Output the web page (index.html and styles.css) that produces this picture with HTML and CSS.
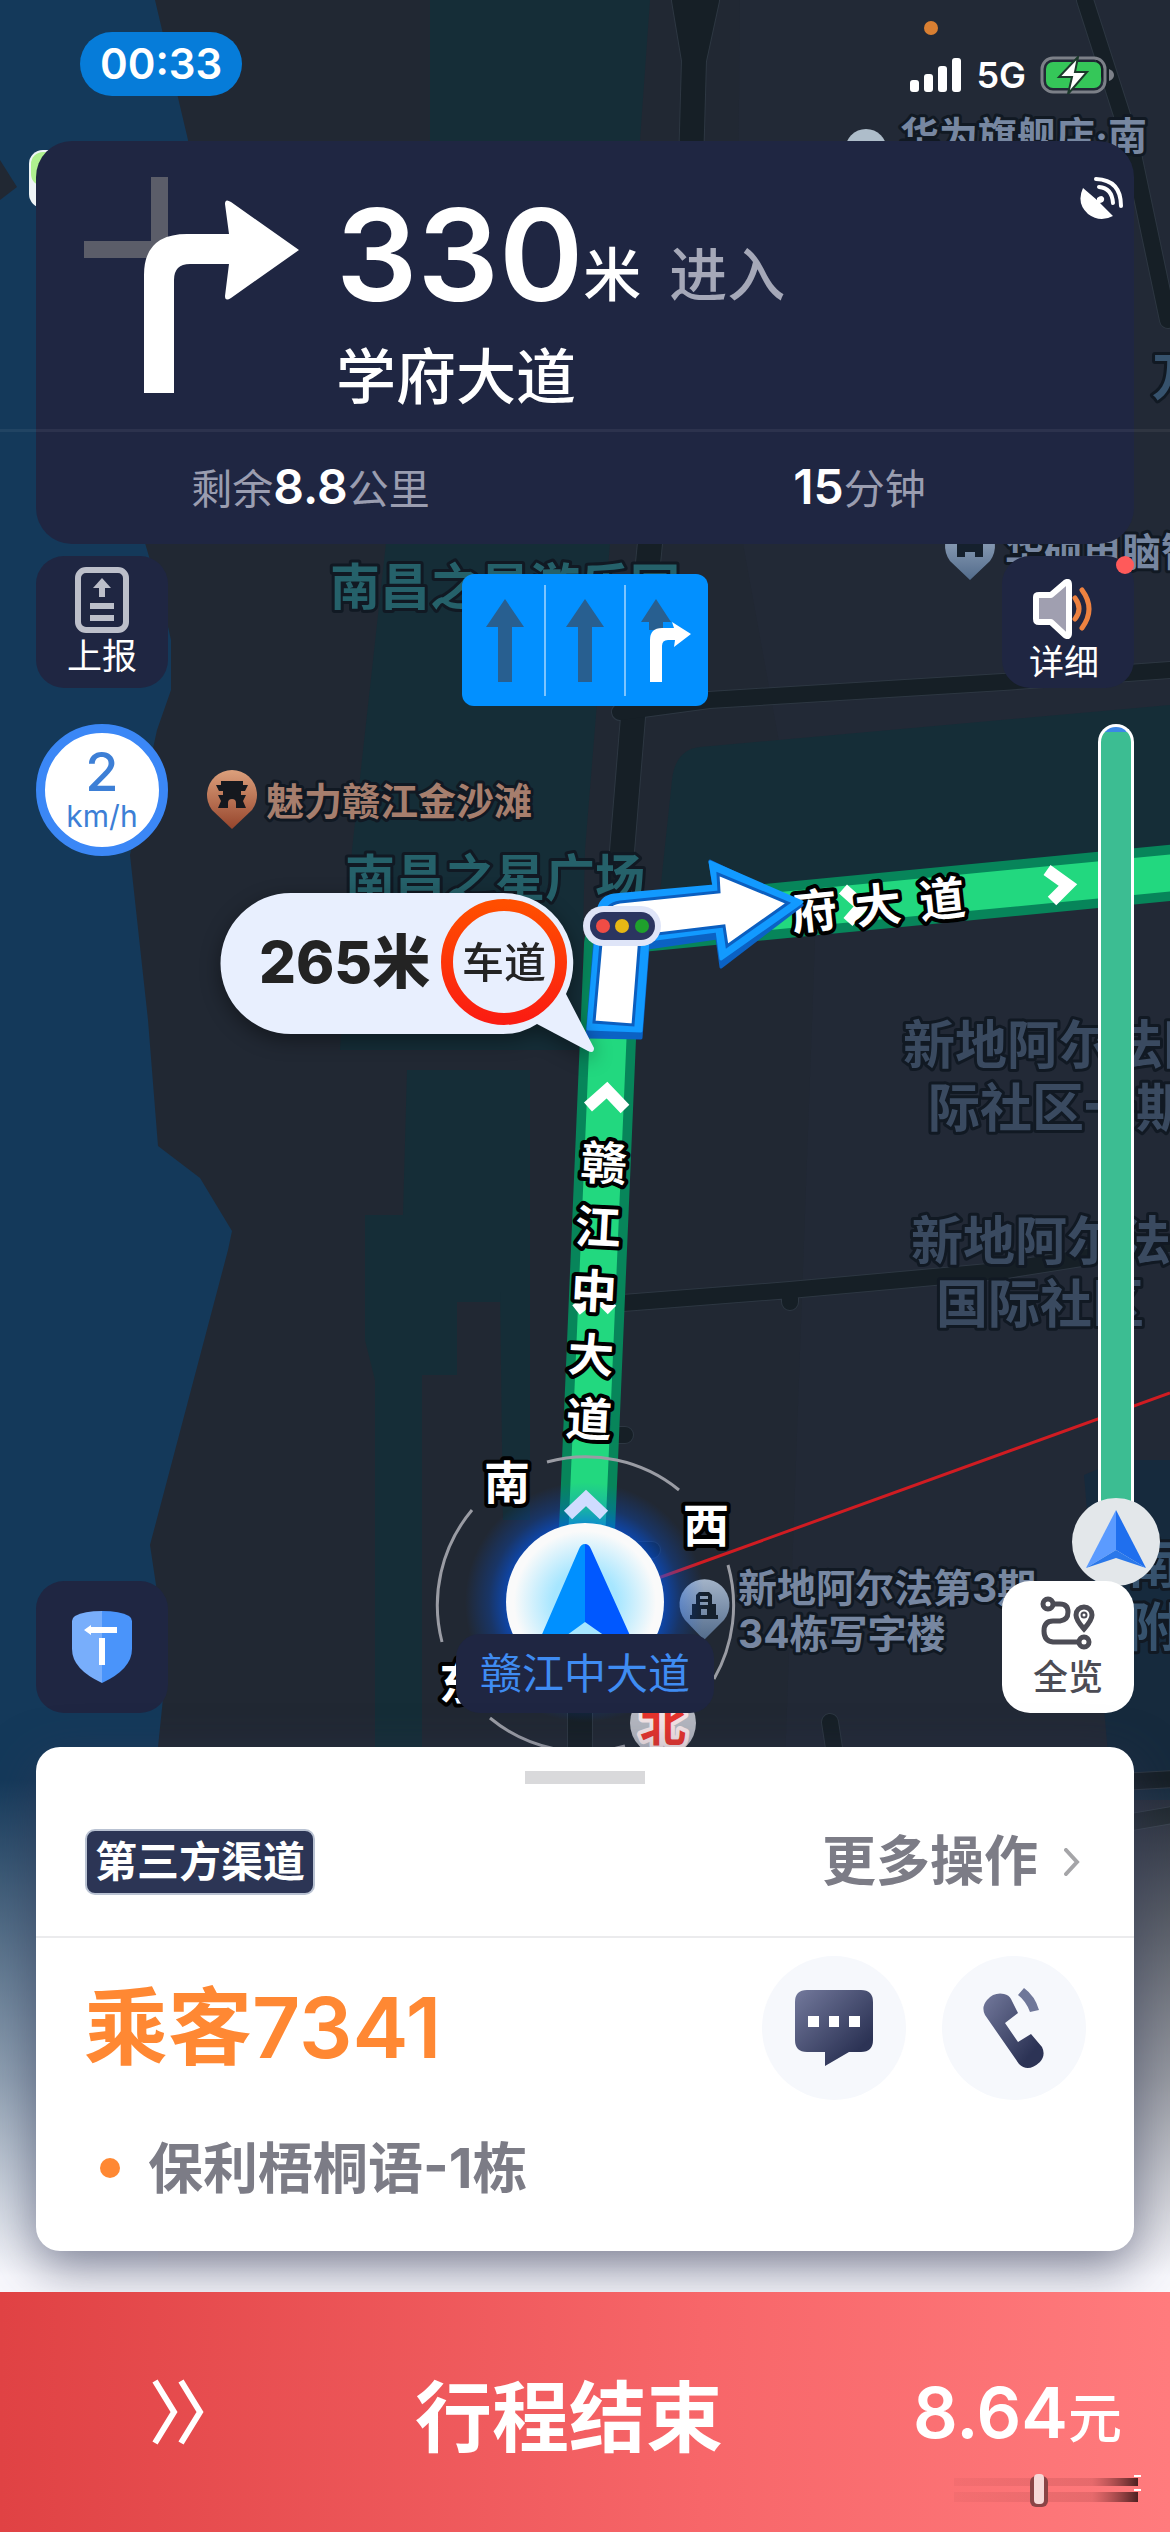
FILE: index.html
```html
<!DOCTYPE html>
<html lang="zh-CN">
<head>
    <meta charset="UTF-8">
    <meta name="viewport" content="width=device-width, initial-scale=1.0">
    <title>行程导航</title>
    <link rel="stylesheet" href="styles.css">
</head>
<body>
<div class="screen">

    <!-- 地图底图 -->
    <svg class="map" viewBox="0 0 1170 2532" preserveAspectRatio="xMidYMin slice" aria-hidden="true">
        <defs>
            <linearGradient id="pinBrown" x1="0" y1="0" x2="0" y2="1">
                <stop offset="0" stop-color="#dca07c"/>
                <stop offset="1" stop-color="#96452c"/>
            </linearGradient>
            <linearGradient id="pinGray" x1="0" y1="0" x2="0" y2="1">
                <stop offset="0" stop-color="#a3b3c8"/>
                <stop offset="1" stop-color="#526b8b"/>
            </linearGradient>
            <linearGradient id="ring" x1="0" y1="0" x2="0" y2="1">
                <stop offset="0" stop-color="#ff4e00"/>
                <stop offset="1" stop-color="#fb1d12"/>
            </linearGradient>
            <radialGradient id="glow">
                <stop offset="0.6" stop-color="#005cff" stop-opacity="0.7"/>
                <stop offset="0.8" stop-color="#005cff" stop-opacity="0.25"/>
                <stop offset="1" stop-color="#005cff" stop-opacity="0"/>
            </radialGradient>
            <radialGradient id="puck">
                <stop offset="0.4" stop-color="#a6e6ff"/>
                <stop offset="0.9" stop-color="#fafafa"/>
            </radialGradient>
            <linearGradient id="fade" x1="0" y1="0" x2="0" y2="1">
                <stop offset="0" stop-color="#f8f8fd" stop-opacity="0"/>
                <stop offset="0.4" stop-color="#f8f8fd" stop-opacity="0.55"/>
                <stop offset="0.66" stop-color="#f8f8fd"/>
            </linearGradient>
        </defs>

        <rect width="1170" height="2532" fill="#212833"/>
        <path d="M740 0H1170V1900H780L815 940L735 500Z" fill="#222936"/>

        <!-- 水域 -->
        <path d="M0 0H155L188 140L145 543L162 600L171 640V690L157 730L130 855L148 1020L158 1146L200 1178L232 1231L228 1250L150 1545L156 1585L168 1650L158 1747V2532H0Z" fill="#14395a"/>
        <path d="M0 160L17 187L0 200Z" fill="#212833"/>
        <path d="M1084 1475L1120 1460H1170V1800H1112Z" fill="#162a3d"/>

        <!-- 绿地 -->
        <g fill="#152d37">
            <path d="M430 0H650L640 140L610 543L585 850L580 1050H340L352 850L386 543L430 140Z"/>
            <path d="M407 1070H530V1302H500V1302H457V1375H422V1900H375V1380L365 1340V1215H403Z"/>
            <path d="M500 1290H530V1520H503Z"/>
            <path d="M655 940L672 780Q675 750 700 747L1170 705V870L800 905Z"/>
        </g>

        <!-- 道路 -->
        <g class="road-edge">
            <path d="M684 0L694 60L690 200L650 543L634 705L618 900M707 0L694 60"/>
            <path class="road-minor" d="M1085 0L1130 140L1168 320M620 712L709 700L1003 682L1170 670"/>
            <path class="road-minor" d="M610 1304L790 1290L1000 1271L1170 1244M790 1294V1302"/>
            <path class="road-minor" d="M605 1435H625M640 1550H652M830 1722L842 1800"/>
            <path d="M580 1690V1800"/>
            <path class="road-minor" d="M1120 1782L1190 1778M1120 1824L1190 1812"/>
        </g>
        <g class="road">
            <path d="M684 0L694 60L690 200L650 543L634 705L618 900M707 0L694 60"/>
            <path class="road-minor" d="M1085 0L1130 140L1168 320M620 712L709 700L1003 682L1170 670"/>
            <path class="road-minor" d="M610 1304L790 1290L1000 1271L1170 1244M790 1294V1302"/>
            <path class="road-minor" d="M605 1435H625M640 1550H652M830 1722L842 1800"/>
            <path d="M580 1690V1800"/>
            <path class="road-minor" d="M1120 1782L1190 1778M1120 1824L1190 1812"/>
        </g>

        <!-- 地名 -->
        <g class="label park-label">
            <text x="330" y="605">南昌之星游乐园</text>
            <text x="345" y="896">南昌之星广场</text>
        </g>
        <g class="label area-label">
            <text x="903" y="1064">新地阿尔法国</text>
            <text x="928" y="1127">际社区一期</text>
            <text x="911" y="1260">新地阿尔法</text>
            <text x="936" y="1323">国际社区</text>
        </g>
        <g class="label area-label east-label">
            <text x="1128" y="1583">南</text>
            <text x="1128" y="1646">附</text>
            <text x="1152" y="396">万</text>
        </g>
        <g class="label poi-label">
            <text x="900" y="150">华为旗舰店·南</text>
            <text x="1005" y="566">华硕电脑智</text>
            <text x="738" y="1602">新地阿尔法第3期</text>
            <text x="738" y="1648">34栋写字楼</text>
        </g>
        <text class="label sight-label" x="266" y="815">魅力赣江金沙滩</text>

        <!-- 兴趣点图标 -->
        <path d="M232 829L212 810A25 25 0 1 1 252 810Z" fill="url(#pinBrown)"/>
        <path d="M221 781H243V785H248L245 791H241V795H246L243 801L246 808H236V803A4 4 0 0 0 228 803V808H218L221 801L218 795H223V791H219L216 785H221Z" fill="#15181e"/>
        <path d="M704 1640L685 1620A25 25 0 1 1 724 1620Z" fill="url(#pinGray)"/>
        <path d="M699 1592h10l3 3v9h4v11h2v4h-28v-4h2v-11h4v-9zM700 1596v3h8v-3zM700 1602v3h8v-3zM701 1609v6h6v-6z" fill="#15202d" fill-rule="evenodd"/>
        <path d="M970 580L950 561A25 25 0 1 1 990 561Z" fill="url(#pinGray)"/>
        <path d="M957 540h26v17h-8v-5h-10v5h-8z" fill="#15202d"/>
        <circle cx="866" cy="150" r="21" fill="#aebdca"/>
        <rect x="29" y="150" width="60" height="58" rx="14" fill="#eef4f6"/>
        <rect x="31" y="152" width="60" height="34" rx="12" fill="#aff08f"/>

        <!-- 规划路线 -->
        <path class="route-edge" d="M587 1530L612 945Q614 926 640 924L1180 872"/>
        <path class="route" d="M587 1530L612 945Q614 926 640 924L1180 872"/>
        <g class="chevron">
            <path d="M588 1107L607 1090L625 1109"/>
            <path d="M576 1310L596 1294L612 1310"/>
            <path d="M843 889L862 906L848 922"/>
            <path d="M1047 870L1068 885L1052 901"/>
        </g>
        <g class="label route-label">
            <text x="604" y="1180" transform="rotate(3 604 1162)">赣</text>
            <text x="598" y="1244" transform="rotate(3 598 1226)">江</text>
            <text x="594" y="1308" transform="rotate(3 594 1290)">中</text>
            <text x="591" y="1372" transform="rotate(3 591 1354)">大</text>
            <text x="589" y="1436" transform="rotate(3 589 1418)">道</text>
            <text x="814" y="928" transform="rotate(-6 814 910)">府</text>
            <text x="878" y="922" transform="rotate(-6 878 904)">大</text>
            <text x="942" y="916" transform="rotate(-6 942 898)">道</text>
        </g>

        <!-- 转向箭头 -->
        <path d="M587 1037L597 914Q600 899 614 897L714 888L710 861L802 905L721 967L717 938L648 948L641 1038Z" fill="#0b62c4" stroke="#0b62c4" stroke-width="3" stroke-linejoin="round"/>
        <path d="M588 1029L598 912Q600 897 614 895L714 886L710 862L802 902L721 959L717 931L648 940L641 1031Z" fill="#129aff" stroke="#129aff" stroke-width="3" stroke-linejoin="round"/>
        <path d="M594 1022L603 920Q605 904 620 902L719 892L718 874L788 903L727 946L724 926L640 936L633 1025Z" fill="#fff" stroke="#0b5fc0" stroke-width="3"/>
        <rect x="583" y="906" width="78" height="40" rx="20" fill="#dfe5f8"/>
        <rect x="590" y="912" width="65" height="28" rx="14" fill="#2b3560"/>
        <circle cx="603" cy="926" r="7" fill="#f04c45"/>
        <circle cx="622" cy="926" r="7" fill="#e6b714"/>
        <circle cx="642" cy="926" r="7" fill="#1fa02c"/>

        <!-- 车道提示气泡 -->
        <g class="bubble">
            <path d="M291 893H503A70 70 0 0 1 566 994L594 1048Q594 1054 588 1051L537 1024Q522 1034 503 1034H291A70 70 0 0 1 291 893Z" fill="#e8effe"/>
            <circle cx="504" cy="962" r="57" fill="none" stroke="url(#ring)" stroke-width="12"/>
            <text class="bubble-distance" x="259" y="983">265米</text>
            <text class="bubble-lane" x="462" y="978">车道</text>
        </g>

        <!-- 罗盘与当前位置 -->
        <path d="M650 1581L1170 1393" stroke="#d01c22" stroke-width="3"/>
        <path d="M472 1510A148 148 0 0 0 442 1642M547 1462A148 148 0 0 1 679 1490M728 1565A148 148 0 0 1 714 1679M490 1718A148 148 0 0 0 625 1746" fill="none" stroke="#9a9ca4" stroke-width="3"/>
        <circle cx="585" cy="1602" r="120" fill="url(#glow)"/>
        <path class="chevron chevron-near" d="M568 1515L586 1498L604 1515"/>
        <circle cx="585" cy="1602" r="79" fill="url(#puck)"/>
        <path d="M585 1544Q581 1544 579 1549L530 1662L585 1622Z" fill="#0090ff"/>
        <path d="M585 1544Q589 1544 591 1549L642 1662L585 1622Z" fill="#0058ff"/>
        <circle cx="663" cy="1723" r="33" fill="#b4b7c0"/>
        <g class="label compass-label">
            <text x="507" y="1499">南</text>
            <text x="706" y="1542">西</text>
            <text x="462" y="1699">东</text>
            <text class="north" x="663" y="1741">北</text>
        </g>

        <rect y="1780" width="1170" height="752" fill="url(#fade)"/>
    </svg>

    <header class="status-bar">
        <span class="clock">00:33</span>
        <i class="mic-dot"></i>
        <div class="signals">
            <svg width="52" height="34" viewBox="0 0 52 34" fill="#fff" aria-hidden="true">
                <rect x="0" y="22" width="9" height="12" rx="3"/>
                <rect x="14" y="16" width="9" height="18" rx="3"/>
                <rect x="28" y="8" width="9" height="26" rx="3"/>
                <rect x="42" y="0" width="9" height="34" rx="3"/>
            </svg>
            <span>5G</span>
            <svg width="74" height="38" viewBox="0 0 74 38" aria-hidden="true">
                <rect x="2" y="2" width="63" height="34" rx="11" fill="none" stroke="#7c8088" stroke-width="3"/>
                <rect x="6" y="6" width="55" height="26" rx="7" fill="#35c759"/>
                <path d="M69 13q5 2 5 6t-5 6z" fill="#7c8088"/>
                <path d="M38 1L19 21h13l-4 17L47 16H35z" fill="#fff" stroke="#1c3a2c" stroke-width="2"/>
            </svg>
        </div>
    </header>

    <section class="nav-card" aria-label="导航信息">
        <div class="turn">
            <svg class="turn-icon" width="216" height="220" viewBox="0 0 216 220" aria-hidden="true">
                <path d="M67 0h17v81H0V64h67z" fill="#5b5d69"/>
                <path d="M60 216V98Q60 57 103 57H145L141 27Q141 21 147 25L215 73L147 121Q141 125 141 119L145 87H106Q90 87 90 103V216Z" fill="#fff"/>
            </svg>
            <div class="turn-text">
                <p class="distance"><strong>330</strong><span>米</span><em>进入</em></p>
                <h1>学府大道</h1>
            </div>
            <svg class="gps-icon" width="44" height="44" viewBox="0 0 44 44" fill="none" aria-hidden="true">
                <path d="M3 11Q-4 26 8 37Q20 46 33 39L20 26Q25 25 24 21Q22 17 17 21V23Z" fill="#fff"/>
                <path d="M19 10Q32 11 33 26M16 2Q41 3 41 29" stroke="#fff" stroke-width="4" stroke-linecap="round"/>
            </svg>
        </div>
        <div class="remain">
            <p>剩余<b>8.8</b>公里</p>
            <p><b>15</b>分钟</p>
        </div>
    </section>

    <main class="tools">
        <div class="tool-column">
            <button class="tool" type="button">
                <svg width="54" height="66" viewBox="0 0 54 66" fill="none" stroke="#bcbfca" aria-hidden="true">
                    <rect x="3" y="3" width="48" height="60" rx="8" stroke-width="6"/>
                    <path d="M27 30V18M15 39H39M15 51H39" stroke-width="6"/>
                    <path d="M18 21L27 11L36 21Z" fill="#bcbfca" stroke="none"/>
                </svg>
                上报
            </button>
            <div class="speed"><b>2</b><span>km/h</span></div>
            <button class="tool tool-shield" type="button" aria-label="安全中心">
                <svg width="60" height="72" viewBox="0 0 60 72" aria-hidden="true">
                    <path d="M30 0Q48 0 57 5Q60 7 60 10V38Q60 58 30 72Z" fill="#4a94fa"/>
                    <path d="M30 0Q12 0 3 5Q0 7 0 10V38Q0 58 30 72Z" fill="#78aefb"/>
                    <path d="M12 19L19 14V16H45V22H19V24ZM27 27H33V54H27Z" fill="#fff"/>
                </svg>
            </button>
        </div>

        <div class="center-column">
            <svg class="lanes" width="246" height="132" viewBox="0 0 246 132" role="img" aria-label="最右车道右转">
                <rect width="246" height="132" rx="12" fill="#0290ff"/>
                <path d="M83 11V122M163 11V122" stroke="#7cc4ff" stroke-width="2"/>
                <path d="M43 25L62 53H50V108H36V53H24ZM123 25L142 53H130V108H116V53H104ZM194 25L209 48H201V56H187V48H179Z" fill="#285f90"/>
                <path d="M188 108V66Q188 54 200 54H212L210 48L229 60L212 73L213 66H206Q200 66 200 72V108Z" fill="#fff"/>
            </svg>
            <p class="road-name">赣江中大道</p>
        </div>

        <div class="tool-column right-column">
            <button class="tool tool-voice" type="button">
                <svg width="62" height="60" viewBox="0 0 62 60" fill="none" aria-hidden="true">
                    <path d="M3 18Q3 16 6 16H18L32 4Q36 1 36 6V54Q36 59 32 56L18 43H6Q3 43 3 40Z" fill="#a09fb0" stroke="#fff" stroke-width="6" stroke-linejoin="round"/>
                    <path d="M42 19Q50 30 42 40M49 11Q63 30 49 49" stroke="#ee8240" stroke-width="5" stroke-linecap="round"/>
                </svg>
                详细
                <i class="badge"></i>
            </button>
            <div class="rail"></div>
            <svg class="rail-position" width="88" height="88" viewBox="0 0 88 88" aria-hidden="true">
                <circle cx="44" cy="44" r="44" fill="#e3e7ea"/>
                <path d="M44 12L14 70L44 52Z" fill="#5b9bff"/>
                <path d="M44 12L74 70L44 52Z" fill="#1f6fee"/>
                <path d="M14 70L44 52L74 70L44 60Z" fill="#2a78ea"/>
            </svg>
            <button class="tool tool-light" type="button">
                <svg width="56" height="54" viewBox="0 0 56 54" fill="none" stroke="#4c4c55" stroke-width="5" aria-hidden="true">
                    <circle cx="8" cy="8" r="5"/>
                    <path d="M13 8H20Q28 8 28 16T20 25H13Q4 25 4 35T13 46H38"/>
                    <circle cx="44" cy="46" r="5"/>
                    <path d="M44 33Q36 24 36 19A8 8 0 0 1 52 19Q52 24 44 33Z"/>
                    <circle cx="44" cy="19" r="1"/>
                </svg>
                全览
            </button>
        </div>
    </main>

    <section class="sheet" aria-label="订单">
        <div class="handle"></div>
        <div class="sheet-head">
            <span class="tag">第三方渠道</span>
            <button class="more" type="button">更多操作
                <svg width="16" height="28" viewBox="0 0 16 28" fill="none" stroke="#a5a5a8" stroke-width="4" stroke-linecap="round" aria-hidden="true"><path d="M2 2L13 14L2 26"/></svg>
            </button>
        </div>
        <div class="passenger">
            <h2>乘客7341</h2>
            <button class="round" type="button" aria-label="发消息">
                <svg width="78" height="76" viewBox="0 0 78 76" aria-hidden="true">
                    <defs>
                        <linearGradient id="navy" x1="0" y1="0" x2="1" y2="1">
                            <stop offset="0" stop-color="#73799c"/>
                            <stop offset="0.8" stop-color="#2c3355"/>
                        </linearGradient>
                    </defs>
                    <path d="M12 0H66Q78 0 78 12V50Q78 62 66 62H54L30 76V62H12Q0 62 0 50V12Q0 0 12 0Z" fill="url(#navy)"/>
                    <path d="M13 26H24V37H13ZM34 26H44V37H34ZM54 26H65V37H54Z" fill="#fff"/>
                </svg>
            </button>
            <button class="round" type="button" aria-label="打电话">
                <svg width="64" height="82" viewBox="0 0 64 82" aria-hidden="true">
                    <path d="M5 13Q12 5 22 7Q27 8 29 12L36 26L23 36L36 55L49 47L60 60Q64 68 58 75Q46 86 37 77L3 28Q-1 20 5 13Z" fill="url(#navy)"/>
                    <path d="M42 1Q53 9 57 23L48 25Q44 14 36 8Z" fill="#6f7799"/>
                </svg>
            </button>
        </div>
        <p class="address">保利梧桐语-1栋</p>
    </section>

    <button class="finish" type="button">
        <svg class="finish-arrows" width="52" height="66" viewBox="0 0 52 66" fill="none" stroke="#fff" stroke-width="6" aria-hidden="true">
            <path d="M3 2L22 33L3 64M29 2L48 33L29 64"/>
        </svg>
        <span class="finish-title">行程结束</span>
        <span class="price">8.64<small>元</small></span>
        <svg class="watermark" width="190" height="38" viewBox="0 0 190 38" aria-hidden="true">
            <defs>
                <linearGradient id="smear" x1="0" y1="0" x2="1" y2="0">
                    <stop offset="0" stop-color="#b04a4c" stop-opacity="0.1"/>
                    <stop offset="0.75" stop-color="#b04a4c" stop-opacity="0.3"/>
                    <stop offset="1" stop-color="#4c2020"/>
                </linearGradient>
            </defs>
            <path d="M0 6H184V14H0ZM0 20H184V30H0Z" fill="url(#smear)"/>
            <rect x="76" y="4" width="18" height="31" rx="6" fill="#8a4446"/>
            <rect x="80" y="2" width="10" height="30" rx="4" fill="#f6d9d8"/>
            <path d="M180 4H187M180 18H187" stroke="#fff" stroke-width="2"/>
        </svg>
    </button>

</div>
</body>
</html>
```
FILE: styles.css
```css
* {
    box-sizing: border-box;
}

body {
    margin: 0;
    background-color: #212833;
    font-family: Inter, "Noto Sans CJK SC", sans-serif;
}

h1, h2, p {
    margin: 0;
}

button {
    border: none;
    margin: 0;
    padding: 0;
    font-family: inherit;
    color: inherit;
    cursor: pointer;
}

.screen {
    position: relative;
    min-height: 100vh;
    display: flex;
    flex-direction: column;
    overflow: hidden;
}

.screen > * {
    position: relative;
}

/* 地图 */
.screen > .map {
    position: absolute;
    top: 0;
    left: 0;
    width: 100%;
    height: 100%;
}

.road-edge,
.road {
    fill: none;
    stroke-linecap: round;
    stroke-linejoin: round;
}
.road-edge {
    stroke: #2d3742;
    stroke-width: 26px;
}
.road-edge .road-minor {
    stroke-width: 18px;
}
.road {
    stroke: #161f26;
    stroke-width: 24px;
}
.road .road-minor {
    stroke-width: 16px;
}

.label {
    font-weight: 700;
    stroke: #111923;
    stroke-width: 6px;
    stroke-linejoin: round;
    paint-order: stroke;
}
.park-label {
    font-size: 50px;
    fill: #25616a;
}
.area-label {
    font-size: 52px;
    fill: #3a4a60;
}
.east-label {
    fill: #36526d;
}
.poi-label {
    font-size: 39px;
    fill: #7787a1;
}
.sight-label {
    font-size: 38px;
    fill: #a67e6d;
}
.route-label,
.compass-label {
    font-size: 46px;
    fill: #fff;
    stroke: #000;
    stroke-width: 8px;
    text-anchor: middle;
}
.north {
    fill: #e6332c;
    stroke: #f3e4e6;
}

.route-edge,
.route {
    fill: none;
    stroke: #07855a;
    stroke-width: 56px;
}
.route {
    stroke: #22d87f;
    stroke-width: 37px;
}
.chevron {
    fill: none;
    stroke: #fff;
    stroke-width: 12px;
}
.chevron-near {
    stroke: #cfdcff;
}

.bubble {
    fill: #232323;
    filter: drop-shadow(0 6px 10px rgba(0, 0, 0, 0.4));
}
.bubble-distance {
    font-size: 58px;
    font-weight: 800;
}
.bubble-lane {
    font-size: 42px;
    font-weight: 500;
}

/* 状态栏 */
.status-bar {
    height: 141px;
    padding: 32px 56px 0 80px;
    display: flex;
    justify-content: space-between;
    align-items: flex-start;
    color: #fff;
}
.clock {
    padding: 0 20px;
    border-radius: 32px;
    background-color: #067cd9;
    font-size: 42px;
    font-weight: 600;
    line-height: 64px;
}
.signals {
    display: flex;
    align-items: center;
    gap: 14px;
    padding-top: 20px;
    font-size: 36px;
    font-weight: 600;
    line-height: 46px;
}
.mic-dot {
    position: absolute;
    top: 21px;
    left: 79%;
    width: 14px;
    height: 14px;
    border-radius: 50%;
    background-color: #d97f32;
}

/* 顶部导航卡片 */
.nav-card {
    margin: 0 36px;
    border-radius: 36px;
    background-color: #1f2642;
    color: #fff;
}
.turn {
    display: flex;
    align-items: flex-start;
    height: 288px;
    padding: 36px 10px 0 48px;
}
.turn-text {
    flex: 1;
    padding-left: 36px;
}
.distance {
    display: flex;
    align-items: flex-end;
    height: 156px;
    font-size: 58px;
    font-weight: 500;
    line-height: 116px;
}
.distance strong {
    font-size: 128px;
    font-weight: 600;
    line-height: 156px;
}
.distance em {
    margin-left: 28px;
    font-style: normal;
    color: #a5a8b8;
}
.turn h1 {
    font-size: 60px;
    font-weight: 500;
    line-height: 88px;
}
.remain {
    display: grid;
    grid-template-columns: 1fr 1fr;
    margin: 0 -36px;
    padding: 0 36px;
    border-top: 3px solid rgba(255, 255, 255, 0.06);
    text-align: center;
    font-size: 41px;
    line-height: 109px;
    color: #9a9db0;
}
.remain b {
    font-size: 48px;
    font-weight: 600;
    color: #fff;
}

/* 悬浮按钮区 */
.tools {
    flex: 1;
    display: flex;
    justify-content: space-between;
    padding: 12px 36px 34px;
}
.tool-column,
.center-column {
    display: flex;
    flex-direction: column;
    align-items: center;
}
.tool {
    position: relative;
    width: 132px;
    height: 132px;
    border-radius: 28px;
    background-color: #1f2642;
    color: #fff;
    font-size: 35px;
    line-height: 42px;
    display: flex;
    flex-direction: column;
    align-items: center;
    justify-content: center;
    gap: 2px;
}
.tool-shield {
    margin-top: auto;
}
.tool-voice {
    padding: 18px 8px 0 0;
}
.tool-light {
    margin-top: -5px;
    background-color: #fff;
    color: #4c4c55;
    font-weight: 500;
    gap: 6px;
}
.badge {
    position: absolute;
    top: 0;
    right: 0;
    width: 18px;
    height: 18px;
    border-radius: 50%;
    background-color: #ff5a5a;
}
.speed {
    margin-top: 36px;
    width: 132px;
    height: 132px;
    border: 9px solid #3b87f6;
    border-radius: 50%;
    background-color: #fff;
    color: #3d7fd6;
    display: flex;
    flex-direction: column;
    align-items: center;
    justify-content: center;
}
.speed b {
    font-size: 54px;
    font-weight: 500;
    line-height: 52px;
}
.speed span {
    font-size: 30px;
    line-height: 36px;
}
.lanes {
    margin-top: 18px;
}
.road-name {
    margin-top: auto;
    padding: 0 24px;
    border-radius: 24px;
    background-color: #1f2642;
    color: #3f8cf2;
    font-size: 42px;
    line-height: 79px;
}
.rail {
    flex: 1;
    width: 36px;
    margin: 36px 0 -24px;
    align-self: flex-end;
    border: 3px solid #fff;
    border-bottom: none;
    border-radius: 18px 18px 0 0;
    background: linear-gradient(#3b87e6 0, #3b87e6 5px, #3cbd92 5px);
}
.rail-position {
    position: relative;
    align-self: flex-end;
    margin-right: -26px;
}

/* 订单面板 */
.sheet {
    margin: 0 36px 41px;
    height: 504px;
    border-radius: 24px;
    background-color: #fff;
    box-shadow: 0 16px 50px rgba(50, 55, 85, 0.6);
    color: #7c7c86;
}
.handle {
    width: 120px;
    height: 13px;
    margin: 0 auto;
    position: relative;
    top: 24px;
    background-color: #d9d9db;
}
.sheet-head {
    display: flex;
    justify-content: space-between;
    align-items: center;
    height: 178px;
    padding: 28px 54px 0 49px;
    border-bottom: 2px solid #ebebed;
}
.tag {
    padding: 0 8px;
    border: 2px solid #b9c2d2;
    border-radius: 10px;
    background-color: #2c3555;
    color: #fff;
    font-size: 42px;
    font-weight: 700;
    line-height: 62px;
}
.more {
    display: flex;
    align-items: center;
    gap: 26px;
    background: none;
    font-size: 54px;
    font-weight: 700;
    line-height: 66px;
}
.passenger {
    display: flex;
    align-items: center;
    gap: 36px;
    padding: 16px 48px 0;
}
.passenger h2 {
    flex: 1;
    font-size: 84px;
    font-weight: 600;
    line-height: 148px;
    color: #ff8833;
}
.round {
    width: 144px;
    height: 144px;
    border-radius: 50%;
    background-color: #f6f8fc;
    display: flex;
    align-items: center;
    justify-content: center;
}
.address {
    display: flex;
    align-items: center;
    gap: 28px;
    padding: 26px 64px 0;
    font-size: 55px;
    font-weight: 700;
    line-height: 80px;
}
.address::before {
    content: "";
    width: 20px;
    height: 20px;
    border-radius: 50%;
    background-color: #ff8833;
}

/* 结束行程 */
.finish {
    display: grid;
    grid-template-columns: 1fr auto 1fr;
    align-items: center;
    height: 240px;
    padding: 0 48px 0 16px;
    background: linear-gradient(90deg, #e04244, #f76669 60%, #ff7b7d);
    color: #fff;
}
.finish-arrows {
    margin-left: 136px;
}
.finish-title {
    font-size: 77px;
    font-weight: 700;
}
.price {
    justify-self: end;
    font-size: 70px;
    font-weight: 600;
}
.price small {
    font-size: 54px;
    font-weight: 500;
}
.watermark {
    position: absolute;
    right: 26px;
    bottom: 22px;
}
```
